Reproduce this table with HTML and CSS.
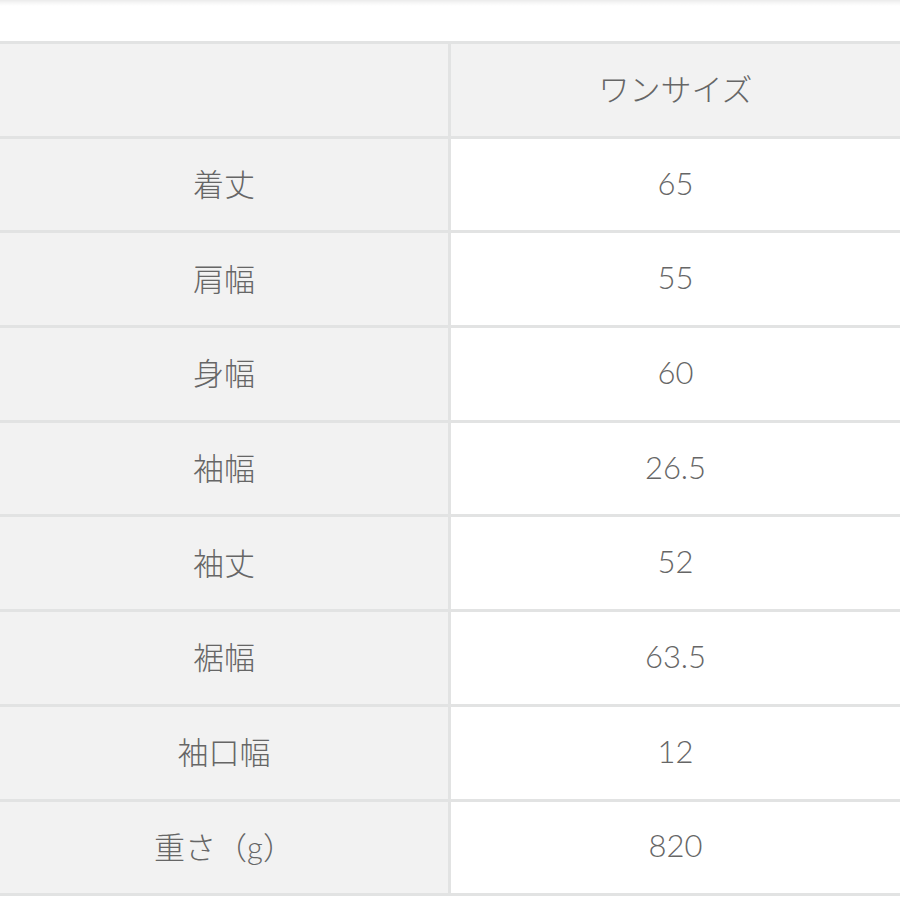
FILE: index.html
```html
<!DOCTYPE html>
<html lang="ja">
<head>
<meta charset="utf-8">
<link rel="stylesheet" href="styles.css">
</head>
<body>
<div class="topbar"></div>
<div class="sizes">
  <div class="cell label"></div><div class="cell head">ワンサイズ</div>
  <div class="cell label">着丈</div><div class="cell val">65</div>
  <div class="cell label">肩幅</div><div class="cell val">55</div>
  <div class="cell label">身幅</div><div class="cell val">60</div>
  <div class="cell label">袖幅</div><div class="cell val">26.5</div>
  <div class="cell label">袖丈</div><div class="cell val">52</div>
  <div class="cell label">裾幅</div><div class="cell val">63.5</div>
  <div class="cell label">袖口幅</div><div class="cell val">12</div>
  <div class="cell label">重さ（g）</div><div class="cell val">820</div>
</div>
</body>
</html>
```
FILE: styles.css
```css
html, body {
  margin: 0;
  padding: 0;
  background: #ffffff;
}
body {
  width: 900px;
  height: 900px;
  overflow: hidden;
  font-family: Lato, "Noto Sans CJK JP", sans-serif;
  font-weight: 300;
  color: #666666;
}
.topbar {
  height: 41px;
  background: linear-gradient(to bottom, #ebebeb 0px, #f7f7f7 3px, #ffffff 6px, #ffffff 41px);
}
.sizes {
  display: grid;
  grid-template-columns: 448px 449px;
  grid-auto-rows: 91.7px;
  gap: 3px;
  padding: 3px 3px 3px 0;
  background: #e2e3e3;
  width: 900px;
  box-sizing: border-box;
}
.cell {
  display: flex;
  align-items: center;
  justify-content: center;
  font-size: 31px;
  padding-bottom: 4px;
  box-sizing: border-box;
  background: #f2f2f2;
}
.val {
  background: #ffffff;
}
.head {
  background: #f2f2f2;
}
```
